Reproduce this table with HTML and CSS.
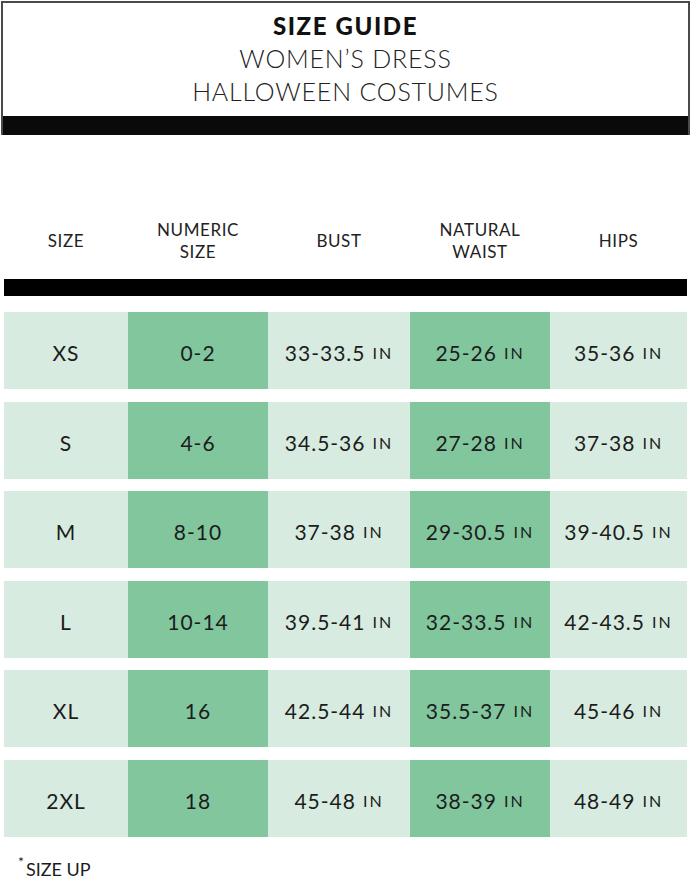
FILE: index.html
```html
<!DOCTYPE html>
<html>
<head>
<meta charset="utf-8">
<link rel="stylesheet" href="styles.css">
</head>
<body>
<div class="page">
  <header class="title-box">
    <div class="title-text">
      <div class="title-main">SIZE GUIDE</div>
      <div class="title-sub">WOMEN’S DRESS</div>
      <div class="title-sub">HALLOWEEN COSTUMES</div>
    </div>
    <div class="title-bar"></div>
  </header>

  <div class="table">
    <div class="head-row">
      <div class="head-cell">SIZE</div>
      <div class="head-cell">NUMERIC<br>SIZE</div>
      <div class="head-cell">BUST</div>
      <div class="head-cell">NATURAL<br>WAIST</div>
      <div class="head-cell">HIPS</div>
    </div>
    <div class="head-bar"></div>

    <div class="rows">
      <div class="row">
        <div class="cell light">XS</div>
        <div class="cell dark">0-2</div>
        <div class="cell light">33-33.5<span class="unit">IN</span></div>
        <div class="cell dark">25-26<span class="unit">IN</span></div>
        <div class="cell light">35-36<span class="unit">IN</span></div>
      </div>
      <div class="row">
        <div class="cell light">S</div>
        <div class="cell dark">4-6</div>
        <div class="cell light">34.5-36<span class="unit">IN</span></div>
        <div class="cell dark">27-28<span class="unit">IN</span></div>
        <div class="cell light">37-38<span class="unit">IN</span></div>
      </div>
      <div class="row">
        <div class="cell light">M</div>
        <div class="cell dark">8-10</div>
        <div class="cell light">37-38<span class="unit">IN</span></div>
        <div class="cell dark">29-30.5<span class="unit">IN</span></div>
        <div class="cell light">39-40.5<span class="unit">IN</span></div>
      </div>
      <div class="row">
        <div class="cell light">L</div>
        <div class="cell dark">10-14</div>
        <div class="cell light">39.5-41<span class="unit">IN</span></div>
        <div class="cell dark">32-33.5<span class="unit">IN</span></div>
        <div class="cell light">42-43.5<span class="unit">IN</span></div>
      </div>
      <div class="row">
        <div class="cell light">XL</div>
        <div class="cell dark">16</div>
        <div class="cell light">42.5-44<span class="unit">IN</span></div>
        <div class="cell dark">35.5-37<span class="unit">IN</span></div>
        <div class="cell light">45-46<span class="unit">IN</span></div>
      </div>
      <div class="row">
        <div class="cell light">2XL</div>
        <div class="cell dark">18</div>
        <div class="cell light">45-48<span class="unit">IN</span></div>
        <div class="cell dark">38-39<span class="unit">IN</span></div>
        <div class="cell light">48-49<span class="unit">IN</span></div>
      </div>
    </div>
  </div>

  <div class="note"><span class="star">*</span>SIZE UP</div>
</div>
</body>
</html>
```

FILE: styles.css
```css
html, body {
  margin: 0;
  padding: 0;
  background: #ffffff;
}

body {
  font-family: "Lato", "Liberation Sans", sans-serif;
  color: #1c1c1c;
}

.page {
  width: 692px;
  height: 879px;
  overflow: hidden;
}

.title-box {
  margin: 1px 2px 0 1px;
  border: 2px solid #4a4a4a;
  border-bottom: none;
  display: flex;
  flex-direction: column;
}

.title-text {
  height: 113px;
  display: flex;
  flex-direction: column;
  align-items: center;
  padding-top: 7px;
  box-sizing: border-box;
}

.title-main {
  font-family: "Lato", sans-serif;
  font-weight: 900;
  font-size: 24px;
  line-height: 32px;
  letter-spacing: 1.6px;
  color: #111;
}

.title-sub {
  font-family: "Lato", sans-serif;
  font-weight: 300;
  font-size: 25px;
  line-height: 33px;
  letter-spacing: 0.8px;
  color: #222;
}

.title-bar {
  height: 19px;
  background: #0a0a0a;
}

.table {
  margin: 0 5px 0 4px;
}

.head-row {
  margin-top: 76px;
  height: 60px;
  display: grid;
  grid-template-columns: 124px 140px 142px 140px 137px;
  align-items: center;
}

.head-cell {
  text-align: center;
  font-family: "Lato", sans-serif;
  font-size: 17px;
  line-height: 22px;
  letter-spacing: 0.6px;
  color: #222;
}

.head-bar {
  margin-top: 8px;
  height: 17px;
  background: #000;
}

.rows {
  margin-top: 16px;
  display: flex;
  flex-direction: column;
  gap: 12.6px;
}

.row {
  display: grid;
  grid-template-columns: 124px 140px 142px 140px 137px;
  height: 77px;
}

.cell {
  display: flex;
  align-items: center;
  justify-content: center;
  padding-top: 4px;
  box-sizing: border-box;
  font-family: "Lato", sans-serif;
  font-size: 21px;
  letter-spacing: 1px;
  color: #1c1c1c;
}

.light {
  background: #d7ebe0;
}

.dark {
  background: #82c69e;
}

.unit {
  font-size: 16px;
  letter-spacing: 2px;
  margin-left: 7px;
}

.note {
  margin: 23px 0 0 18px;
  font-family: "Lato", sans-serif;
  font-size: 18px;
  line-height: 18px;
  color: #1c1c1c;
}

.star {
  font-size: 14px;
  line-height: 0;
  vertical-align: 9px;
  margin-right: 2px;
}
```
